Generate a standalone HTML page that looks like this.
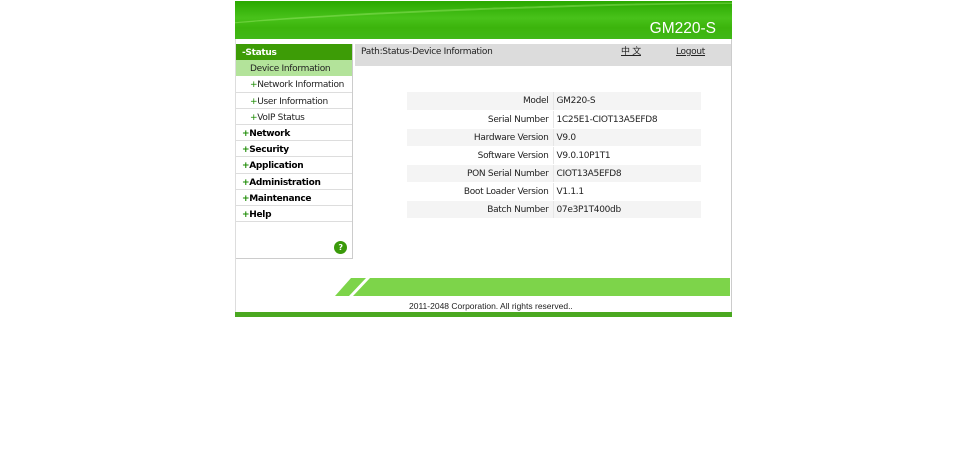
<!DOCTYPE html>
<html><head><style>
*{margin:0;padding:0;box-sizing:border-box}
body{width:960px;height:455px;background:#fff;position:relative;font-family:"DejaVu Sans",Verdana,sans-serif;font-size:9px;color:#222;overflow:hidden;letter-spacing:-0.3px}
.a{position:absolute}
#hdr{left:235px;top:1px;width:497px;height:38px;background:linear-gradient(180deg,#2aa800 0%,#48c21a 45%,#3cb40c 70%,#40b818 100%);overflow:hidden;letter-spacing:0}
#hdr:before{content:"";position:absolute;left:-50px;top:6px;width:650px;height:22px;border-radius:50%;border-top:2px solid rgba(200,255,150,.3);transform:rotate(-2deg)}
#hdr span{position:absolute;right:16px;top:19px;color:#fff;font-family:"Liberation Sans",sans-serif;font-size:15.5px}
#wrap{left:235px;top:39px;width:497px;height:275px;border-left:1px solid #ddd;border-right:1px solid #ccc}
#side{left:236px;top:44px;width:117px;height:215px;border-right:1px solid #ccc;border-bottom:1px solid #ccc}
.r{height:16.2px;line-height:18px;border-bottom:1px solid #ddd;font-size:9px;white-space:nowrap}
.t{font-weight:bold;padding-left:6px;color:#000}
.t b{color:#1a8a00}
.s{padding-left:14px}
.s b{color:#1a8a00;font-weight:normal}
#path{left:355px;top:44px;width:376px;height:22px;background:#dcdcdc;line-height:16px;padding-left:6px}
table{position:absolute;left:407px;top:92px;width:294px;border-collapse:collapse}
td{height:18px;font-size:9px;border-bottom:1px solid #fff;padding-top:1px}
tr:nth-child(odd) td{background:#f4f4f4}
td.l{text-align:right;width:146px;padding-right:4px;border-right:1px solid #e6e6e6}
td.v{padding-left:3px}
</style></head><body>
<div class="a" id="hdr"><span>GM220-S</span></div>
<div class="a" id="wrap"></div>
<div class="a" id="side">
<div class="r t" style="background:#3d9c06;color:#fff;border-color:#3d9c06">-Status</div>
<div class="r s" style="background:#b3e39a;border-color:#b3e39a">Device Information</div>
<div class="r s"><b>+</b>Network Information</div>
<div class="r s"><b>+</b>User Information</div>
<div class="r s"><b>+</b>VoIP Status</div>
<div class="r t"><b>+</b>Network</div>
<div class="r t"><b>+</b>Security</div>
<div class="r t"><b>+</b>Application</div>
<div class="r t"><b>+</b>Administration</div>
<div class="r t"><b>+</b>Maintenance</div>
<div class="r t"><b>+</b>Help</div>
<div class="a" style="left:98px;top:197px;width:13px;height:13px;border-radius:50%;background:#3a9a0a;color:#fff;font-size:8px;text-align:center;line-height:13px;font-weight:bold">?</div>
</div>
<div class="a" id="path">Path:Status-Device Information
<span class="a" style="left:266px;top:0;text-decoration:underline">中 文</span>
<span class="a" style="left:321px;top:0;text-decoration:underline">Logout</span></div>
<table>
<tr><td class="l">Model</td><td class="v">GM220-S</td></tr>
<tr><td class="l">Serial Number</td><td class="v">1C25E1-CIOT13A5EFD8</td></tr>
<tr><td class="l">Hardware Version</td><td class="v">V9.0</td></tr>
<tr><td class="l">Software Version</td><td class="v">V9.0.10P1T1</td></tr>
<tr><td class="l">PON Serial Number</td><td class="v">CIOT13A5EFD8</td></tr>
<tr><td class="l">Boot Loader Version</td><td class="v">V1.1.1</td></tr>
<tr><td class="l">Batch Number</td><td class="v">07e3P1T400db</td></tr>
</table>
<svg class="a" style="left:335px;top:278px" width="395" height="18"><polygon points="16,0 395,0 395,18 0,18" fill="#7dd44a"/><polygon points="31,0 35,0 18,18 14,18" fill="#fff"/></svg>
<div class="a" style="left:409px;top:301px;font-family:'Liberation Sans',sans-serif;font-size:8.5px;color:#222;letter-spacing:0">2011-2048 Corporation. All rights reserved..</div>
<div class="a" style="left:235px;top:312px;width:497px;height:5px;background:#4aa820"></div>
</body></html>
